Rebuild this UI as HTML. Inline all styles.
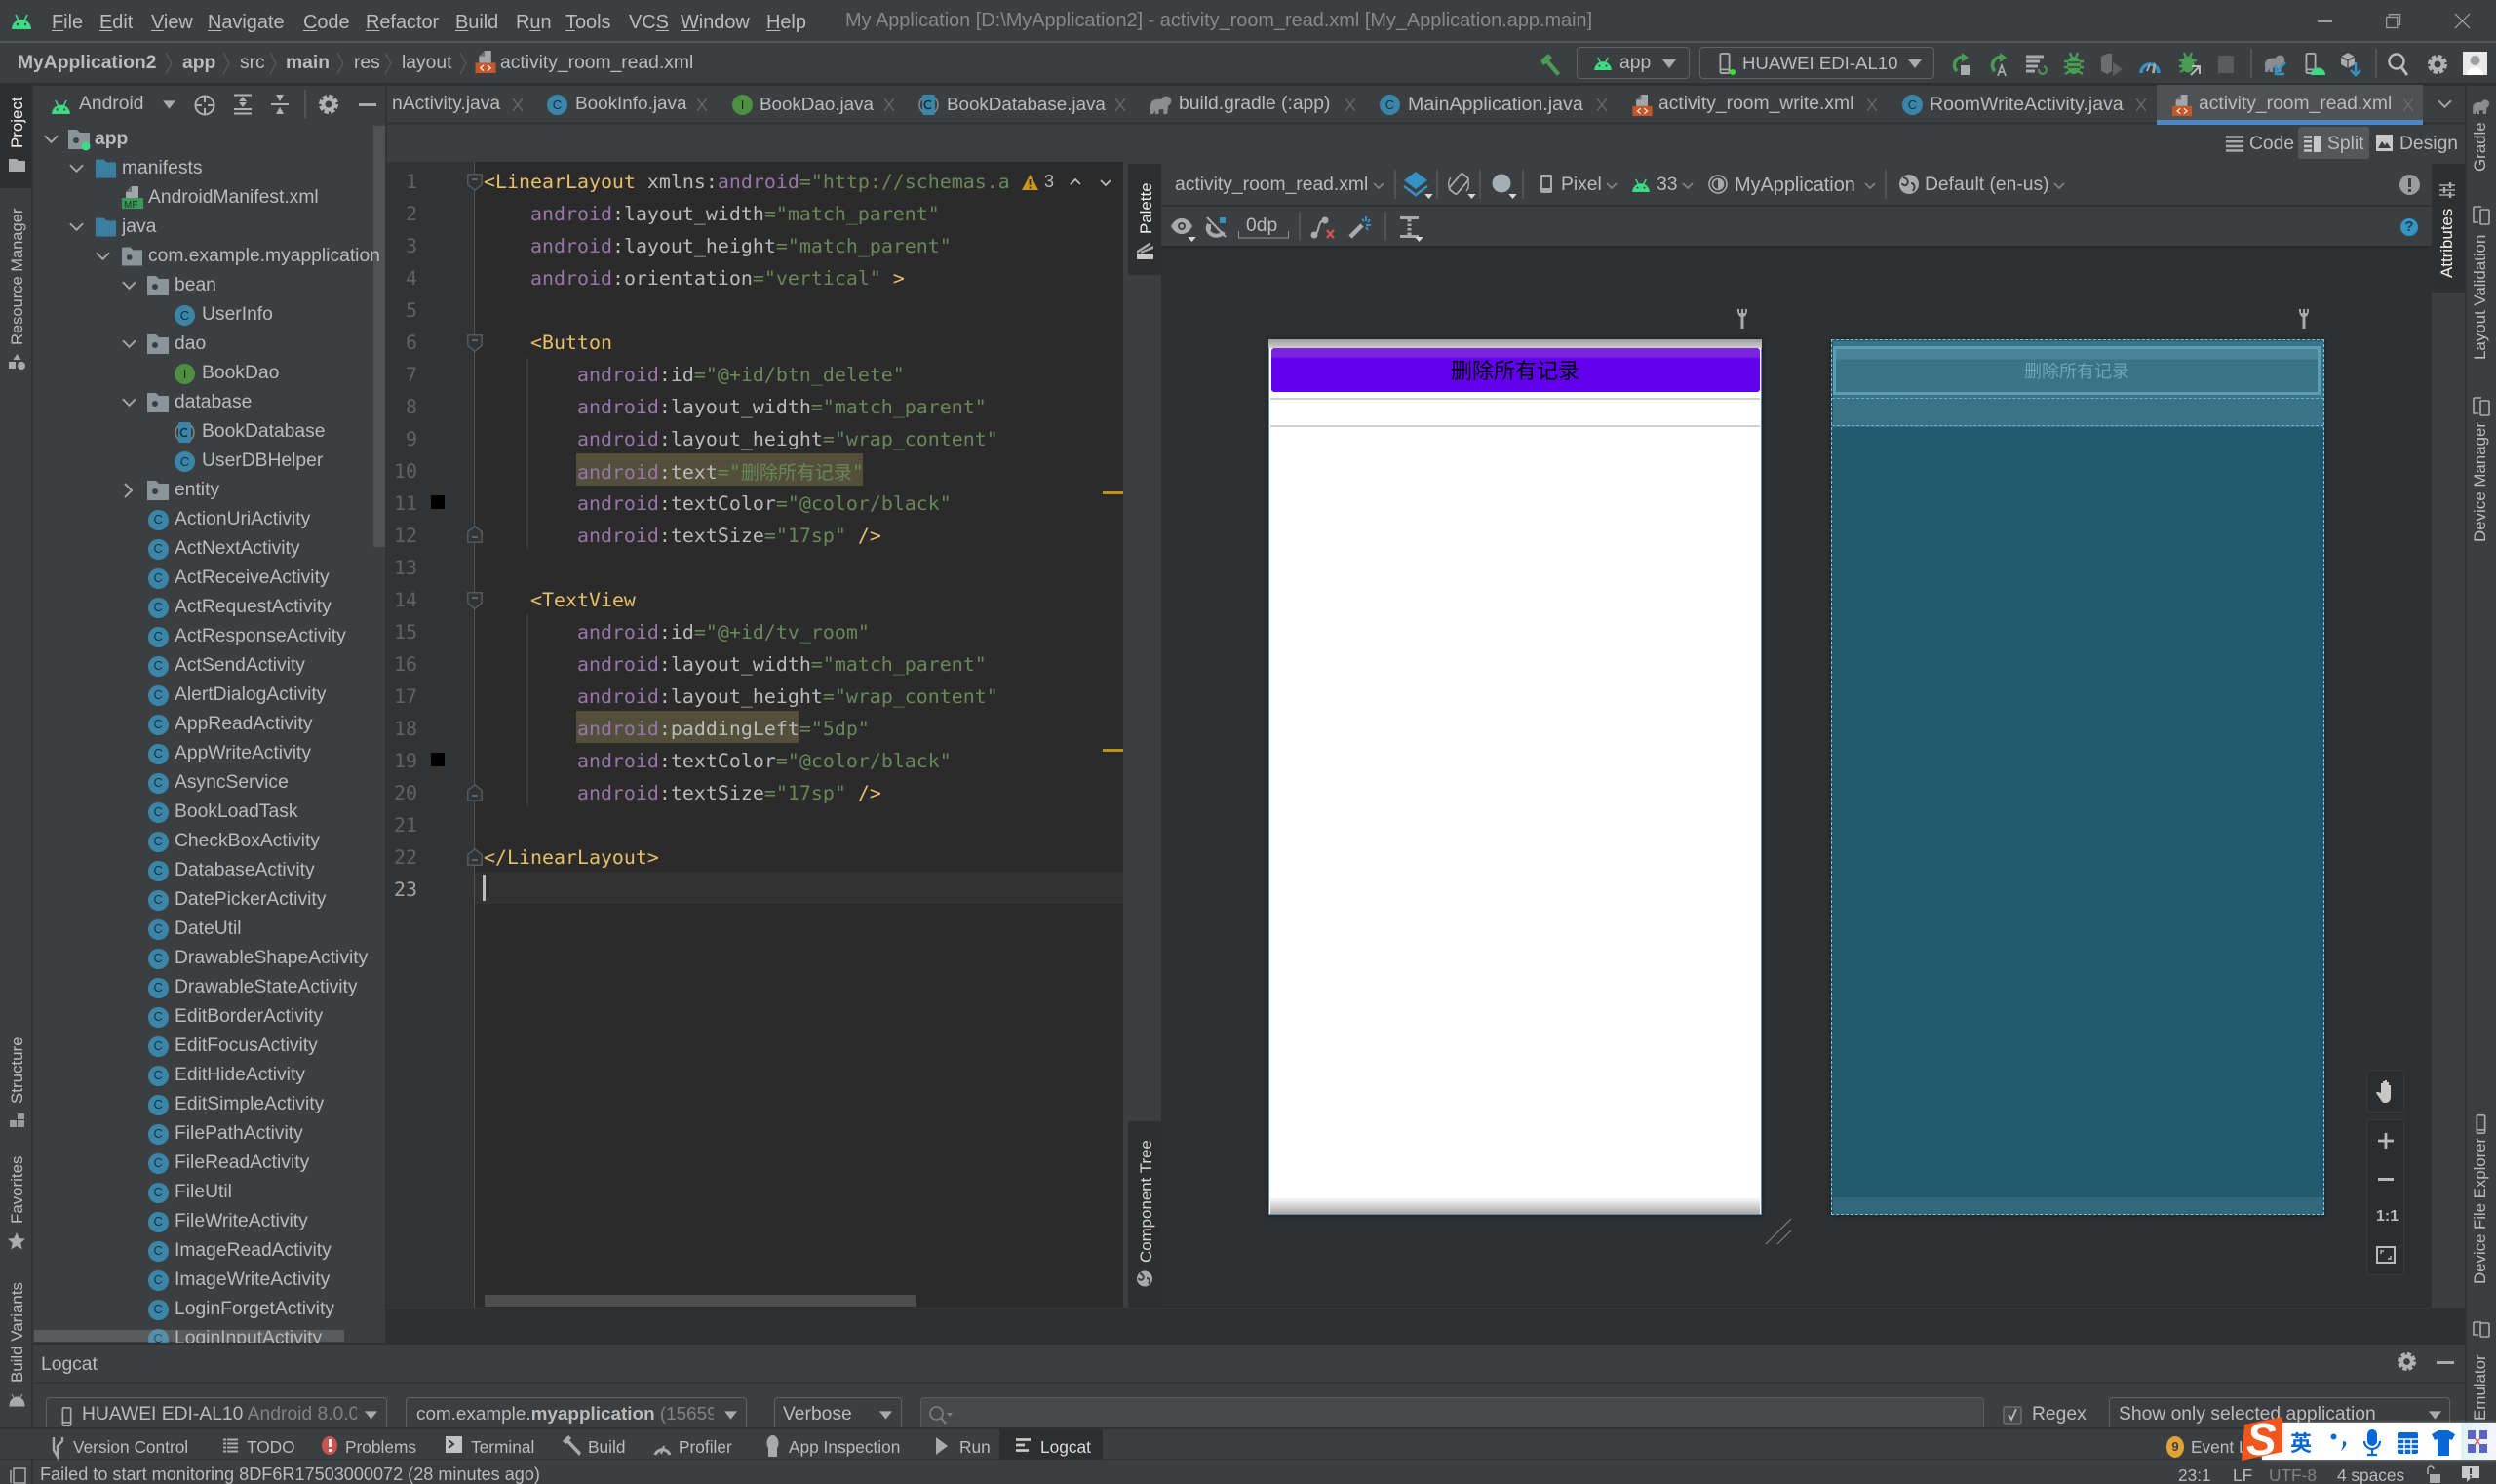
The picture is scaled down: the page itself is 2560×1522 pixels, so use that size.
<!DOCTYPE html>
<html lang="en"><head><meta charset="utf-8"><title>activity_room_read.xml</title>
<style>
*{box-sizing:border-box}
html{margin:0;padding:0;width:2560px;height:1522px;overflow:hidden}
body{margin:0;padding:0;position:relative;width:2560px;height:1522px;overflow:hidden;background:#3c3f41;color:#bbb;font:19.3px/30px "Liberation Sans","Noto Sans CJK SC",sans-serif}
.t{position:absolute;white-space:nowrap;margin-top:-15px;height:30px;line-height:30px}
.m{font-size:19.9px}
.b{position:absolute}
svg{position:absolute;overflow:visible}
u{text-decoration:underline;text-underline-offset:2px}
.dim{color:#808284}
.v{position:absolute;writing-mode:vertical-rl;transform:rotate(180deg);white-space:nowrap;font-size:16.9px;line-height:20px;color:#bbb}
.ci,.ii{position:absolute;width:21px;height:21px;border-radius:50%;background:#3b86a8;color:#12303e;font:13px/21px "Liberation Sans",sans-serif;text-align:center}
.ii{background:#4f8f42;color:#16300f}
.r{position:relative;height:30px;line-height:30px;white-space:nowrap;padding-left:179px}
.r svg{top:5px}
.c::before{content:"C";position:absolute;left:152px;top:5px;width:20.5px;height:20.5px;border-radius:50%;background:#3b86a8;color:#12303e;font:13px/20.5px "Liberation Sans",sans-serif;text-align:center}
.code{position:absolute;left:496px;top:169.5px;font:19.93px/33px "DejaVu Sans Mono","Liberation Mono",monospace;color:#bababa}
.code div{height:33px;white-space:pre}
.code i{font-style:normal}
.g{color:#e8bf6a}.n{color:#9876aa}.s{color:#6a8759}
.cj{font:19px/33px "Noto Sans CJK SC",sans-serif}
.ln{position:absolute;left:396px;top:169.5px;width:32px;text-align:right;font:19.93px/33px "DejaVu Sans Mono","Liberation Mono",monospace;color:#606366}
.ln div{height:33px}
.cb{position:absolute;border:1.5px solid #5f6365;border-radius:4px;background:#3c3f41}
.sep{position:absolute;width:2px;background:#515456}
.sm{font-size:17.3px}
</style></head><body>

<svg width="0" height="0" style="position:absolute"><defs>
<symbol id="and" viewBox="0 0 20 16"><path d="M0 16a10 10 0 0 1 20 0z" fill="#3ddc84"/><path d="M4 1l3 6M16 1l-3 6" stroke="#3ddc84" stroke-width="1.6"/><circle cx="6" cy="11" r="1.2" fill="#3c3f41"/><circle cx="14" cy="11" r="1.2" fill="#3c3f41"/></symbol>
<symbol id="xml" viewBox="0 0 22 24"><path d="M10 0h7v13H4V6z" fill="#a3a6a8"/><path d="M10 0v6H4z" fill="#6c6f71"/><rect y="13" width="22" height="11" fill="#c4582a"/><path d="M9 15.500l-3.500 3 3.500 3M13 15.500l3.500 3-3.500 3" fill="none" stroke="#eee" stroke-width="1.300"/></symbol>
<symbol id="x" viewBox="0 0 10 13"><path d="M0 0l10 13M10 0L0 13" stroke="#6b6e70" stroke-width="1.200"/></symbol>
<symbol id="cd" viewBox="0 0 16 10"><path d="M1 1l7 7 7-7" fill="none" stroke="#a6a8aa" stroke-width="2"/></symbol>
<symbol id="cr" viewBox="0 0 10 16"><path d="M1 1l7 7-7 7" fill="none" stroke="#a6a8aa" stroke-width="2"/></symbol>
<symbol id="fb" viewBox="0 0 22 20"><path d="M0 0h9l3 3h10v17H0z" fill="#3b7fa0"/></symbol>
<symbol id="fg" viewBox="0 0 22 20"><path d="M0 0h9l3 3h10v17H0z" fill="#8a9499"/><circle cx="8" cy="11" r="3" fill="#3c3f41"/></symbol>
<symbol id="fold" viewBox="0 0 16 18"><path d="M.8.800h14.400v10.700L8 17.200.8 11.500z" fill="#313335" stroke="#5a5c5e" stroke-width="1.400"/><path d="M5 6h6" stroke="#707274" stroke-width="1.500"/></symbol>
<symbol id="foldb" viewBox="0 0 16 18"><path d="M.8 17.200h14.400V6.500L8 .8.800 6.500z" fill="#313335" stroke="#5a5c5e" stroke-width="1.400"/><path d="M5 12h6" stroke="#707274" stroke-width="1.500"/></symbol>
<symbol id="gear" viewBox="0 0 20 20"><circle cx="10" cy="10" r="5.500" fill="none" stroke="#afb1b3" stroke-width="4"/><circle cx="10" cy="10" r="8.500" fill="none" stroke="#afb1b3" stroke-width="3" stroke-dasharray="4.500 2.170"/></symbol>
<symbol id="chev" viewBox="0 0 12 8"><path d="M1 1l5 5 5-5" fill="none" stroke="#7f8183" stroke-width="1.800"/></symbol>
<symbol id="tri" viewBox="0 0 14 9"><path d="M0 0h14L7 9z" fill="#a8aaac"/></symbol>
<symbol id="stri" viewBox="0 0 10 6"><path d="M0 0h10L5 6z" fill="#d8d8d8"/></symbol>
<symbol id="phone" viewBox="0 0 12 24"><rect x="1" y="1" width="10" height="22" rx="1.500" fill="none" stroke="#a8aaac" stroke-width="2"/><path d="M1 19h10" stroke="#a8aaac" stroke-width="2"/></symbol>
<symbol id="ele" viewBox="0 0 24 20"><path d="M1 20V11C1 6 5 4 10 4h3c1-3 4-4 7-3 3 1 4 4 3 7-1 2-2 3-3 3l-1 9h-4v-5h-5v5H6v-4l-2 4z" fill="#8b8e90"/></symbol>
</defs></svg>

<!-- title bar -->
<div class="b" style="left:0;top:42px;width:2560px;height:1.500px;background:#515658"></div>
<svg style="left:10px;top:14px" width="24" height="16"><use href="#and" width="24" height="16"/></svg>
<span class="t m" style="left:53px;top:23px"><u>F</u>ile</span>
<span class="t m" style="left:102px;top:23px"><u>E</u>dit</span>
<span class="t m" style="left:155px;top:23px"><u>V</u>iew</span>
<span class="t m" style="left:213px;top:23px"><u>N</u>avigate</span>
<span class="t m" style="left:311px;top:23px"><u>C</u>ode</span>
<span class="t m" style="left:375px;top:23px"><u>R</u>efactor</span>
<span class="t m" style="left:467px;top:23px"><u>B</u>uild</span>
<span class="t m" style="left:529px;top:23px">R<u>u</u>n</span>
<span class="t m" style="left:580px;top:23px"><u>T</u>ools</span>
<span class="t m" style="left:645px;top:23px">VC<u>S</u></span>
<span class="t m" style="left:698px;top:23px"><u>W</u>indow</span>
<span class="t m" style="left:786px;top:23px"><u>H</u>elp</span>
<span class="t m" style="left:867px;top:21px;color:#86898b">My Application [D:\MyApplication2] - activity_room_read.xml [My_Application.app.main]</span>
<div class="b" style="left:2377px;top:21px;width:15px;height:2px;background:#9b9d9f"></div>
<svg style="left:2447px;top:14px" width="15" height="15"><path d="M3.500 3V.7h11v10.600H12M.7 3.500h11v11H.7z" fill="none" stroke="#9b9d9f" stroke-width="1.300"/></svg>
<svg style="left:2518px;top:14px" width="15" height="15"><path d="M0 0l15 15M15 0L0 15" stroke="#a8aaac" stroke-width="1.200"/></svg>

<!-- nav bar -->
<span class="t" style="left:18px;top:65px;font-weight:bold">MyApplication2</span>
<svg style="left:169px;top:54px" width="8" height="22"><path d="M1 0l6 11-6 11" fill="none" stroke="#5c5f61"/></svg>
<span class="t" style="left:187px;top:65px;font-weight:bold">app</span>
<svg style="left:228px;top:54px" width="8" height="22"><path d="M1 0l6 11-6 11" fill="none" stroke="#5c5f61"/></svg>
<span class="t" style="left:246px;top:65px">src</span>
<svg style="left:276px;top:54px" width="8" height="22"><path d="M1 0l6 11-6 11" fill="none" stroke="#5c5f61"/></svg>
<span class="t" style="left:293px;top:65px;font-weight:bold">main</span>
<svg style="left:345px;top:54px" width="8" height="22"><path d="M1 0l6 11-6 11" fill="none" stroke="#5c5f61"/></svg>
<span class="t" style="left:363px;top:65px">res</span>
<svg style="left:394px;top:54px" width="8" height="22"><path d="M1 0l6 11-6 11" fill="none" stroke="#5c5f61"/></svg>
<span class="t" style="left:412px;top:65px">layout</span>
<svg style="left:471px;top:54px" width="8" height="22"><path d="M1 0l6 11-6 11" fill="none" stroke="#5c5f61"/></svg>
<svg style="left:487px;top:52px" width="22" height="23"><use href="#xml" width="22" height="23"/></svg>
<span class="t" style="left:513px;top:65px">activity_room_read.xml</span>

<!-- main toolbar -->
<svg style="left:1578px;top:54px" width="24" height="24"><path d="M2 8l8-7 4 4-3 3 11 13-3 3L8 11 5 13z" fill="#499c54"/></svg>
<div class="cb" style="left:1617px;top:48px;width:116px;height:33px"></div>
<svg style="left:1635px;top:58px" width="18" height="14"><use href="#and" width="18" height="14"/></svg>
<span class="t" style="left:1661px;top:65px">app</span>
<svg style="left:1705px;top:61px" width="14" height="9"><use href="#tri" width="14" height="9"/></svg>
<div class="cb" style="left:1743px;top:48px;width:241px;height:33px"></div>
<svg style="left:1763px;top:54px" width="12" height="22"><use href="#phone" width="12" height="22"/></svg>
<div class="b" style="left:1774px;top:71px;width:6px;height:6px;border-radius:50%;background:#2ee62e"></div>
<span class="t" style="left:1787px;top:65px;font-size:18.6px">HUAWEI EDI-AL10</span>
<svg style="left:1957px;top:61px" width="14" height="9"><use href="#tri" width="14" height="9"/></svg>

<svg style="left:2000px;top:54px" width="22" height="24"><path d="M13 4.500a8.500 8.500 0 0 0-6 14.500" fill="none" stroke="#499c54" stroke-width="3.500"/><path d="M12 0l7 5-7 5z" fill="#499c54"/><rect x="11" y="13" width="9" height="10" fill="#a8aaac"/></svg>
<svg style="left:2039px;top:54px" width="22" height="24"><path d="M13 4.500a8.500 8.500 0 0 0-6 14.500" fill="none" stroke="#499c54" stroke-width="3.500"/><path d="M12 0l7 5-7 5z" fill="#499c54"/><path d="M10 24l4-11 4 11M11.500 20h5" fill="none" stroke="#a8aaac" stroke-width="1.700"/></svg>
<svg style="left:2078px;top:56px" width="22" height="20"><path d="M0 2h18M0 7h14M0 12h12M0 17h9" stroke="#a8aaac" stroke-width="3"/><path d="M13 15a4 4 0 1 0 5-3" fill="none" stroke="#499c54" stroke-width="2"/></svg>
<svg style="left:2117px;top:54px" width="20" height="24"><ellipse cx="10" cy="13" rx="7" ry="9" fill="#499c54"/><path d="M6 0l2 5M14 0l-2 5M0 9h20M0 15h20M1 22l5-3M19 22l-5-3" stroke="#499c54" stroke-width="2.400"/><path d="M4 10h12M4 15h12" stroke="#3c3f41" stroke-width="1.500"/></svg>
<svg style="left:2155px;top:54px" width="22" height="24"><path d="M0 4l6-3h5v18l-5 3-6-3z" fill="#6b6e70"/><path d="M12 10l10 7-10 7z" fill="#5d6062"/></svg>
<svg style="left:2194px;top:56px" width="22" height="20"><path d="M2 19a9 9 0 0 1 18 0" fill="none" stroke="#3592c4" stroke-width="3.500"/><path d="M16 19h-3l2-11 2 2z" fill="#a8aaac" /><path d="M8 17l3-7" stroke="#a8aaac" stroke-width="2"/></svg>
<svg style="left:2235px;top:54px" width="22" height="24"><ellipse cx="9" cy="12" rx="6.500" ry="8.500" fill="#499c54"/><path d="M5 0l2 5M13 0l-2 5M0 8h18M0 14h12M1 20l5-3" stroke="#499c54" stroke-width="2.400"/><path d="M12 23l9-9M21 22v-8h-8" fill="none" stroke="#b8babc" stroke-width="2"/></svg>
<div class="b" style="left:2275px;top:57px;width:16px;height:18px;background:#5a5b5c"></div>
<div class="sep" style="left:2308px;top:50px;height:30px"></div>
<svg style="left:2322px;top:56px" width="22" height="18"><use href="#ele" width="22" height="18"/></svg>
<svg style="left:2332px;top:63px" width="14" height="15"><path d="M12 1L3 11M2 4v9h9" fill="none" stroke="#3592c4" stroke-width="2.500"/></svg>
<svg style="left:2364px;top:54px" width="12" height="22"><use href="#phone" width="12" height="22"/></svg>
<svg style="left:2370px;top:66px" width="15" height="11"><path d="M0 11a7.500 7.500 0 0 1 15 0z" fill="#3ddc84"/></svg>
<svg style="left:2400px;top:54px" width="24" height="24"><path d="M8 0l7 4v8l-7 4-7-4V4z" fill="#a8aaac"/><path d="M1 4l7 4 7-4M8 8v8" fill="none" stroke="#3c3f41" stroke-width="1.200"/><path d="M16 10v12M11 18l5 5 5-5" fill="none" stroke="#3592c4" stroke-width="2.500"/></svg>
<div class="sep" style="left:2436px;top:50px;height:30px"></div>
<svg style="left:2449px;top:54px" width="22" height="24"><circle cx="9" cy="9" r="7.500" fill="none" stroke="#b8babc" stroke-width="2.500"/><path d="M14 15l6 8" stroke="#b8babc" stroke-width="3"/></svg>
<svg style="left:2490px;top:56px" width="20" height="20"><use href="#gear" width="20" height="20"/></svg>
<div class="b" style="left:2526px;top:53px;width:25px;height:24px;background:#e8e8e8"></div>
<svg style="left:2526px;top:53px" width="25" height="24"><circle cx="12.500" cy="9" r="5" fill="#9ea0a2"/><path d="M4 24c1-7 5-8 8.500-8s7.500 1 8.500 8z" fill="#fff"/></svg>

<!-- horizontal dark seps -->
<div class="b" style="left:0;top:85px;width:2560px;height:2.500px;background:#2f3133"></div>

<!-- left strip -->
<div class="b" style="left:32px;top:87px;width:1.500px;height:1435px;background:#323537"></div>
<div class="b" style="left:0;top:87px;width:32px;height:106px;background:#2d2f30"></div>
<span class="v" style="left:8px;top:100px;color:#f2f2f2;height:52px">Project</span>
<svg style="left:9px;top:163px" width="17" height="13"><path d="M0 0h8l2 2h7v11H0z" fill="#a8aaac"/></svg>
<span class="v" style="left:8px;top:213px;height:141px;font-size:16.5px">Resource Manager</span>
<svg style="left:9px;top:363px" width="17" height="16"><path d="M8.500 0l4 6h-8z M0 8h7v7H0z" fill="#a8aaac"/><circle cx="13" cy="12" r="4" fill="#a8aaac"/></svg>
<span class="v" style="left:8px;top:1063px;height:69px">Structure</span>
<svg style="left:10px;top:1142px" width="15" height="14"><path d="M8 0h7v6H8zM0 7h7v7H0zM8 7h7v7H8z" fill="#9a9c9e"/></svg>
<span class="v" style="left:8px;top:1188px;height:67px">Favorites</span>
<svg style="left:8px;top:1264px" width="18" height="18"><path d="M9 0l2.700 6 6.300.6-4.800 4.300 1.500 6.500L9 14l-5.700 3.400 1.500-6.500L0 6.600 6.300 6z" fill="#a8aaac"/></svg>
<span class="v" style="left:8px;top:1316px;height:102px">Build Variants</span>
<svg style="left:10px;top:1430px" width="15" height="12"><path d="M0 12a7.500 9 0 0 1 15 0zM2 0l3 5M13 0l-3 5" fill="#a8aaac" stroke="#a8aaac"/></svg>

<!-- project tool window header -->
<svg style="left:53px;top:102px" width="19" height="15"><use href="#and" width="19" height="15"/></svg>
<span class="t" style="left:81px;top:107px">Android</span>
<svg style="left:167px;top:103px" width="13" height="9"><use href="#tri" width="13" height="9"/></svg>
<svg style="left:199px;top:97px" width="22" height="22"><circle cx="11" cy="11" r="9.500" fill="none" stroke="#afb1b3" stroke-width="2"/><path d="M11 1v7M11 14v7M1 11h7M14 11h7" stroke="#afb1b3" stroke-width="2"/></svg>
<svg style="left:240px;top:96px" width="18" height="22"><path d="M0 1.500h18M0 20.500h18M0 16h18" stroke="#afb1b3" stroke-width="2"/><path d="M9 3l4 5H5zM9 14l-4-5h8z" fill="#afb1b3"/></svg>
<svg style="left:278px;top:96px" width="18" height="22"><path d="M0 11h18" stroke="#afb1b3" stroke-width="2"/><path d="M9 8L5 1h8zM9 14l4 7H5z" fill="#afb1b3"/></svg>
<div class="sep" style="left:312px;top:92px;height:29px"></div>
<svg style="left:327px;top:97px" width="20" height="20"><use href="#gear" width="20" height="20"/></svg>
<div class="b" style="left:368px;top:106px;width:18px;height:2.500px;background:#a8aaac"></div>

<!-- tree scrollbar (beneath the rows) -->
<div class="b" style="left:383px;top:129px;width:12px;height:432px;background:#505355"></div>

<!-- project tree -->
<div class="b" style="left:33px;top:128px;width:363px;height:1249px;overflow:hidden">
<div style="position:relative;left:-33px;width:396px;height:1260px;overflow:hidden">
<div class="r" style="padding-left:97px;font-weight:bold"><svg style="left:45px;top:10px" width="15" height="10"><use href="#cd" width="15" height="10"/></svg><svg style="left:70px" width="22" height="20"><use href="#fg" width="22" height="20"/></svg><svg style="left:83px;top:17px" width="10" height="10"><circle cx="5" cy="5" r="4.500" fill="#3ddc84"/></svg>app</div>
<div class="r" style="padding-left:125px"><svg style="left:71px;top:10px" width="15" height="10"><use href="#cd" width="15" height="10"/></svg><svg style="left:98px" width="21" height="20"><use href="#fb" width="21" height="20"/></svg>manifests</div>
<div class="r" style="padding-left:152px"><svg style="left:125px;top:3px" width="22" height="23"><path d="M10 0h7v12H4V6z" fill="#a3a6a8"/><path d="M10 0v6H4z" fill="#6c6f71"/><rect y="12" width="22" height="11" fill="#3a9a5c"/><text x="2" y="22" font-size="10" font-family="Liberation Sans,sans-serif" fill="#16331f">MF</text></svg>AndroidManifest.xml</div>
<div class="r" style="padding-left:125px"><svg style="left:71px;top:10px" width="15" height="10"><use href="#cd" width="15" height="10"/></svg><svg style="left:98px" width="21" height="20"><use href="#fb" width="21" height="20"/></svg>java</div>
<div class="r" style="padding-left:152px"><svg style="left:98px;top:10px" width="15" height="10"><use href="#cd" width="15" height="10"/></svg><svg style="left:125px" width="21" height="20"><use href="#fg" width="21" height="20"/></svg>com.example.myapplication</div>
<div class="r"><svg style="left:125px;top:10px" width="15" height="10"><use href="#cd" width="15" height="10"/></svg><svg style="left:151px" width="22" height="20"><use href="#fg" width="22" height="20"/></svg>bean</div>
<div class="r" style="padding-left:207px"><span class="ci" style="left:179px;top:5px">C</span>UserInfo</div>
<div class="r"><svg style="left:125px;top:10px" width="15" height="10"><use href="#cd" width="15" height="10"/></svg><svg style="left:151px" width="22" height="20"><use href="#fg" width="22" height="20"/></svg>dao</div>
<div class="r" style="padding-left:207px"><span class="ii" style="left:179px;top:5px">I</span>BookDao</div>
<div class="r"><svg style="left:125px;top:10px" width="15" height="10"><use href="#cd" width="15" height="10"/></svg><svg style="left:151px" width="22" height="20"><use href="#fg" width="22" height="20"/></svg>database</div>
<div class="r" style="padding-left:207px"><svg style="left:179px" width="21" height="21"><circle cx="10.500" cy="10.500" r="9.500" fill="none" stroke="#7f8a90" stroke-width="1.500"/><rect x="4" y="0" width="13" height="21" rx="2" fill="#3b86a8"/><path d="M13 7.500a4 4 0 1 0 0 6" fill="none" stroke="#12303e" stroke-width="1.600"/></svg>BookDatabase</div>
<div class="r" style="padding-left:207px"><span class="ci" style="left:179px;top:5px">C</span>UserDBHelper</div>
<div class="r"><svg style="left:127px;top:7px" width="10" height="16"><use href="#cr" width="10" height="16"/></svg><svg style="left:151px" width="22" height="20"><use href="#fg" width="22" height="20"/></svg>entity</div>
<div class="r c">ActionUriActivity</div>
<div class="r c">ActNextActivity</div>
<div class="r c">ActReceiveActivity</div>
<div class="r c">ActRequestActivity</div>
<div class="r c">ActResponseActivity</div>
<div class="r c">ActSendActivity</div>
<div class="r c">AlertDialogActivity</div>
<div class="r c">AppReadActivity</div>
<div class="r c">AppWriteActivity</div>
<div class="r c">AsyncService</div>
<div class="r c">BookLoadTask</div>
<div class="r c">CheckBoxActivity</div>
<div class="r c">DatabaseActivity</div>
<div class="r c">DatePickerActivity</div>
<div class="r c">DateUtil</div>
<div class="r c">DrawableShapeActivity</div>
<div class="r c">DrawableStateActivity</div>
<div class="r c">EditBorderActivity</div>
<div class="r c">EditFocusActivity</div>
<div class="r c">EditHideActivity</div>
<div class="r c">EditSimpleActivity</div>
<div class="r c">FilePathActivity</div>
<div class="r c">FileReadActivity</div>
<div class="r c">FileUtil</div>
<div class="r c">FileWriteActivity</div>
<div class="r c">ImageReadActivity</div>
<div class="r c">ImageWriteActivity</div>
<div class="r c">LoginForgetActivity</div>
<div class="r c">LoginInputActivity</div>
</div></div>
<div class="b" style="left:35px;top:1364px;width:318px;height:12px;background:rgba(170,170,170,.25)"></div>
<div class="b" style="left:395px;top:87px;width:1.500px;height:1290px;background:#323537"></div>

<!-- tabs -->
<div class="b" style="left:396px;top:125px;width:2132px;height:3px;background:#323537"></div>
<span class="t" style="left:402px;top:107px">nActivity.java</span>
<svg style="left:526px;top:101px" width="10" height="13"><use href="#x" width="10" height="13"/></svg>
<span class="ci" style="left:561px;top:97px">C</span>
<span class="t" style="left:590px;top:107px;font-size:18.9px">BookInfo.java</span>
<svg style="left:715px;top:101px" width="10" height="13"><use href="#x" width="10" height="13"/></svg>
<span class="ii" style="left:751px;top:97px">I</span>
<span class="t" style="left:779px;top:107px;font-size:18.8px">BookDao.java</span>
<svg style="left:907px;top:101px" width="10" height="13"><use href="#x" width="10" height="13"/></svg>
<svg style="left:942px;top:97px" width="21" height="21"><circle cx="10.500" cy="10.500" r="9.500" fill="none" stroke="#7f8a90" stroke-width="1.500"/><rect x="4" y="0" width="13" height="21" rx="2" fill="#3b86a8"/><path d="M13 7.500a4 4 0 1 0 0 6" fill="none" stroke="#12303e" stroke-width="1.600"/></svg>
<span class="t" style="left:971px;top:107px;font-size:18.8px">BookDatabase.java</span>
<svg style="left:1144px;top:101px" width="10" height="13"><use href="#x" width="10" height="13"/></svg>
<svg style="left:1179px;top:98px" width="23" height="19"><use href="#ele" width="23" height="19"/></svg>
<span class="t" style="left:1209px;top:107px">build.gradle (:app)</span>
<svg style="left:1380px;top:101px" width="10" height="13"><use href="#x" width="10" height="13"/></svg>
<span class="ci" style="left:1415px;top:97px">C</span>
<span class="t" style="left:1444px;top:107px;font-size:19.6px">MainApplication.java</span>
<svg style="left:1638px;top:101px" width="10" height="13"><use href="#x" width="10" height="13"/></svg>
<svg style="left:1673px;top:97px" width="23" height="22"><use href="#xml" width="23" height="22"/></svg>
<span class="t" style="left:1701px;top:107px">activity_room_write.xml</span>
<svg style="left:1915px;top:101px" width="10" height="13"><use href="#x" width="10" height="13"/></svg>
<span class="ci" style="left:1951px;top:97px">C</span>
<span class="t" style="left:1979px;top:107px;font-size:19.5px">RoomWriteActivity.java</span>
<svg style="left:2191px;top:101px" width="10" height="13"><use href="#x" width="10" height="13"/></svg>
<div class="b" style="left:2212px;top:87px;width:273px;height:36px;background:#4e5254"></div>
<div class="b" style="left:2212px;top:123px;width:273px;height:5px;background:#4a88c7"></div>
<svg style="left:2227px;top:97px" width="22" height="22"><use href="#xml" width="22" height="22"/></svg>
<span class="t" style="left:2255px;top:107px">activity_room_read.xml</span>
<svg style="left:2465px;top:101px" width="10" height="13"><use href="#x" width="10" height="13"/></svg>
<svg style="left:2500px;top:102px" width="15" height="10"><use href="#cd" width="15" height="10"/></svg>

<!-- Code/Split/Design -->
<svg style="left:2283px;top:139px" width="18" height="17"><path d="M0 1.500h18M0 6.200h18M0 11h18M0 15.500h18" stroke="#a8aaac" stroke-width="2.400"/></svg>
<span class="t" style="left:2307px;top:148px">Code</span>
<div class="b" style="left:2357px;top:130px;width:73px;height:33px;background:#55585a;border-radius:3px"></div>
<svg style="left:2363px;top:139px" width="18" height="17"><path d="M0 1.500h8M0 6.200h8M0 11h8M0 15.500h8" stroke="#c8c8c8" stroke-width="2.400"/><rect x="10" y="0" width="8" height="17" fill="#c8c8c8"/></svg>
<span class="t" style="left:2387px;top:148px">Split</span>
<svg style="left:2437px;top:138px" width="17" height="17"><rect width="17" height="17" fill="#c8c8c8"/><path d="M2 14l4-7 3 4 2-3 4 6z" fill="#3c3f41"/></svg>
<span class="t" style="left:2461px;top:148px">Design</span>

<!-- editor -->
<div class="b" style="left:396px;top:166px;width:756px;height:1175px;background:#2b2b2b"></div>
<div class="b" style="left:396px;top:166px;width:90px;height:1175px;background:#313335"></div>
<div class="b" style="left:486px;top:894px;width:666px;height:33px;background:#323232"></div>
<div class="b" style="left:396px;top:894px;width:90px;height:33px;background:#323436"></div>
<div class="b" style="left:485.500px;top:166px;width:1.500px;height:1175px;background:#555"></div>
<div class="b" style="left:591px;top:465px;width:294px;height:33px;background:#52503a"></div>
<div class="b" style="left:591px;top:729px;width:228px;height:33px;background:#52503a"></div>
<div class="b" style="left:540px;top:367px;width:1.500px;height:196px;background:#3b3b3b"></div>
<div class="b" style="left:540px;top:630px;width:1.500px;height:197px;background:#3b3b3b"></div>

<div class="ln"><div>1</div><div>2</div><div>3</div><div>4</div><div>5</div><div>6</div><div>7</div><div>8</div><div>9</div><div>10</div><div>11</div><div>12</div><div>13</div><div>14</div><div>15</div><div>16</div><div>17</div><div>18</div><div>19</div><div>20</div><div>21</div><div>22</div><div style="color:#a4a3a3">23</div></div>

<svg style="left:479px;top:178px" width="16" height="18"><use href="#fold" width="16" height="18"/></svg>
<svg style="left:479px;top:343px" width="16" height="18"><use href="#fold" width="16" height="18"/></svg>
<svg style="left:479px;top:539px" width="16" height="18"><use href="#foldb" width="16" height="18"/></svg>
<svg style="left:479px;top:607px" width="16" height="18"><use href="#fold" width="16" height="18"/></svg>
<svg style="left:479px;top:804px" width="16" height="18"><use href="#foldb" width="16" height="18"/></svg>
<svg style="left:479px;top:870px" width="16" height="18"><use href="#foldb" width="16" height="18"/></svg>
<div class="b" style="left:442px;top:508px;width:14px;height:14px;background:#000"></div>
<div class="b" style="left:442px;top:772px;width:14px;height:14px;background:#000"></div>

<div class="code"><div><i class="g">&lt;LinearLayout</i> xmlns:<i class="n">android</i><i class="s">="http://schemas.a</i></div>
<div>    <i class="n">android</i>:layout_width<i class="s">="match_parent"</i></div>
<div>    <i class="n">android</i>:layout_height<i class="s">="match_parent"</i></div>
<div>    <i class="n">android</i>:orientation<i class="s">="vertical"</i> <i class="g">&gt;</i></div>
<div></div>
<div>    <i class="g">&lt;Button</i></div>
<div>        <i class="n">android</i>:id<i class="s">="@+id/btn_delete"</i></div>
<div>        <i class="n">android</i>:layout_width<i class="s">="match_parent"</i></div>
<div>        <i class="n">android</i>:layout_height<i class="s">="wrap_content"</i></div>
<div>        <i class="n">android</i>:text<i class="s">="<i class="cj">删除所有记录</i>"</i></div>
<div>        <i class="n">android</i>:textColor<i class="s">="@color/black"</i></div>
<div>        <i class="n">android</i>:textSize<i class="s">="17sp"</i> <i class="g">/&gt;</i></div>
<div></div>
<div>    <i class="g">&lt;TextView</i></div>
<div>        <i class="n">android</i>:id<i class="s">="@+id/tv_room"</i></div>
<div>        <i class="n">android</i>:layout_width<i class="s">="match_parent"</i></div>
<div>        <i class="n">android</i>:layout_height<i class="s">="wrap_content"</i></div>
<div>        <i class="n">android</i>:paddingLeft<i class="s">="5dp"</i></div>
<div>        <i class="n">android</i>:textColor<i class="s">="@color/black"</i></div>
<div>        <i class="n">android</i>:textSize<i class="s">="17sp"</i> <i class="g">/&gt;</i></div>
<div></div>
<div><i class="g">&lt;/LinearLayout&gt;</i></div>
<div></div></div>
<div class="b" style="left:495px;top:897px;width:2.500px;height:27px;background:#bbb"></div>

<svg style="left:1048px;top:179px" width="17" height="16"><path d="M8.500 0L17 16H0z" fill="#c99a1a"/><path d="M8.500 5v6M8.500 12.500v2" stroke="#2b2b2b" stroke-width="1.800"/></svg>
<span class="t" style="left:1071px;top:186px;font-size:18px">3</span>
<svg style="left:1097px;top:182px" width="12" height="8"><path d="M1 7l5-5 5 5" fill="none" stroke="#b8babc" stroke-width="1.800"/></svg>
<svg style="left:1128px;top:184px" width="12" height="8"><path d="M1 1l5 5 5-5" fill="none" stroke="#b8babc" stroke-width="1.800"/></svg>
<div class="b" style="left:1131px;top:504px;width:21px;height:3px;background:#be9117"></div>
<div class="b" style="left:1131px;top:768px;width:21px;height:3px;background:#be9117"></div>
<div class="b" style="left:497px;top:1328px;width:443px;height:12px;background:#4d4d4d"></div>

<!-- palette strip -->
<div class="b" style="left:1152px;top:166px;width:39px;height:1175px;background:#3c3f41"></div>
<div class="b" style="left:1157px;top:168px;width:34px;height:114px;background:#2d2f30"></div>
<div class="b" style="left:1157px;top:1150px;width:34px;height:191px;background:#2d2f30"></div>
<span class="v" style="left:1166px;top:189px;color:#f2f2f2;height:51px">Palette</span>
<svg style="left:1166px;top:248px" width="18" height="18"><path d="M0 9L14 0v3L0 12zM4 10l13-6v3L4 12z" fill="#a8aaac"/><rect x="0" y="12" width="17" height="6" rx="1" fill="#c8c8c8"/></svg>
<span class="v" style="left:1166px;top:1167px;color:#d8d8d8;height:128px">Component Tree</span>
<svg style="left:1165px;top:1303px" width="18" height="17"><circle cx="9" cy="8.500" r="8" fill="#a8aaac"/><path d="M4 3c3 1 5 4 3 6s-4 0-4-1M11 8c3 0 4 2 2 6" fill="none" stroke="#3c3f41" stroke-width="2"/></svg>

<!-- design toolbars -->
<div class="b" style="left:1191px;top:168px;width:1303px;height:85px;background:#3c3f41"></div>
<div class="b" style="left:1191px;top:210px;width:1303px;height:1.500px;background:#2f3133"></div>
<div class="b" style="left:1191px;top:253px;width:1337px;height:1088px;background:#2e3032"></div>
<div class="b" style="left:1191px;top:251.500px;width:1303px;height:2px;background:#292b2d"></div>
<div class="b" style="left:2494px;top:253px;width:34px;height:1088px;background:#3c3f41"></div>
<span class="t" style="left:1205px;top:190px">activity_room_read.xml</span>
<svg style="left:1408px;top:187px" width="12" height="8"><use href="#chev" width="12" height="8"/></svg>
<div class="sep" style="left:1430px;top:174px;height:30px"></div>
<svg style="left:1440px;top:176px" width="24" height="28"><path d="M12 0l12 9-12 9L0 9z" fill="#3592c4"/><path d="M0 15l12 9 12-9" fill="none" stroke="#3592c4" stroke-width="2.500"/></svg>
<svg style="left:1461px;top:199px" width="9" height="5"><use href="#stri" width="9" height="5"/></svg>
<div class="sep" style="left:1473px;top:174px;height:30px"></div>
<svg style="left:1484px;top:176px" width="24" height="26"><rect x="7" y="2" width="10" height="21" rx="2" fill="none" stroke="#a8aaac" stroke-width="1.800" transform="rotate(40 12 13)"/><path d="M4 6a11 11 0 0 0-1 12M20 20a11 11 0 0 0 1-12" fill="none" stroke="#a8aaac" stroke-width="1.400"/></svg>
<svg style="left:1505px;top:199px" width="9" height="5"><use href="#stri" width="9" height="5"/></svg>
<div class="sep" style="left:1517px;top:174px;height:30px"></div>
<svg style="left:1530px;top:178px" width="20" height="20"><circle cx="10" cy="10" r="9.500" fill="#a3aeb5"/><path d="M12 .5a9.500 9.500 0 0 1 0 19 8 8 0 0 0 0-19z" fill="#d8d8d8"/></svg>
<svg style="left:1547px;top:199px" width="9" height="5"><use href="#stri" width="9" height="5"/></svg>
<div class="sep" style="left:1561px;top:174px;height:30px"></div>
<svg style="left:1580px;top:179px" width="12" height="19"><rect width="12" height="19" rx="2" fill="#a8aaac"/><rect x="2" y="3" width="8" height="11" fill="#3c3f41"/></svg>
<span class="t" style="left:1601px;top:190px">Pixel</span>
<svg style="left:1647px;top:187px" width="12" height="8"><use href="#chev" width="12" height="8"/></svg>
<svg style="left:1674px;top:183px" width="18" height="14"><use href="#and" width="18" height="14"/></svg>
<span class="t" style="left:1699px;top:190px">33</span>
<svg style="left:1725px;top:187px" width="12" height="8"><use href="#chev" width="12" height="8"/></svg>
<svg style="left:1752px;top:179px" width="20" height="20"><circle cx="10" cy="10" r="9" fill="none" stroke="#a8aaac" stroke-width="1.600"/><circle cx="10" cy="10" r="5.500" fill="none" stroke="#a8aaac" stroke-width="1.600"/><path d="M10 5a5 5 0 0 1 0 10z" fill="#a8aaac"/></svg>
<span class="t" style="left:1779px;top:190px;font-size:19.9px">MyApplication</span>
<svg style="left:1912px;top:187px" width="12" height="8"><use href="#chev" width="12" height="8"/></svg>
<div class="sep" style="left:1933px;top:174px;height:30px"></div>
<svg style="left:1948px;top:179px" width="20" height="20"><circle cx="10" cy="10" r="10" fill="#a8aaac"/><path d="M4 3c4 1 6 4 4 7s-5 0-5-1M12 9c3 0 5 3 2 8" fill="none" stroke="#3c3f41" stroke-width="2"/></svg>
<span class="t" style="left:1974px;top:190px">Default (en-us)</span>
<svg style="left:2106px;top:187px" width="12" height="8"><use href="#chev" width="12" height="8"/></svg>
<div class="b" style="left:2461px;top:179px;width:21px;height:21px;border-radius:50%;background:#9a9c9e"></div>
<div class="b" style="left:2470px;top:183px;width:3px;height:9px;background:#3c3f41"></div>
<div class="b" style="left:2470px;top:194px;width:3px;height:3px;background:#3c3f41"></div>

<svg style="left:1201px;top:224px" width="22" height="18"><path d="M0 8C4 1 8 0 11 0s7 1 11 8c-4 7-8 8-11 8S4 15 0 8z" fill="#a8aaac"/><circle cx="11" cy="8" r="4" fill="#3c3f41"/><circle cx="11" cy="8" r="2" fill="#a8aaac"/></svg>
<svg style="left:1218px;top:243px" width="9" height="5"><use href="#stri" width="9" height="5"/></svg>
<svg style="left:1237px;top:222px" width="21" height="23"><path d="M3 8a8 7 0 0 0 15 8M3 8v6" fill="none" stroke="#a8aaac" stroke-width="4"/><path d="M1 1l19 20" stroke="#a8aaac" stroke-width="2"/><rect x="14" y="1" width="6" height="6" fill="#3592c4"/></svg>
<span class="t" style="left:1278px;top:232px">0dp</span>
<svg style="left:1270px;top:236px" width="52" height="9"><path d="M.5 1v7h51V1" fill="none" stroke="#8f9193" stroke-width="1"/></svg>
<div class="sep" style="left:1332px;top:217px;height:30px"></div>
<svg style="left:1344px;top:222px" width="26" height="23"><path d="M3 19c7 0 4-15 11-15" fill="none" stroke="#a8aaac" stroke-width="2"/><circle cx="4" cy="19" r="3.500" fill="#a8aaac"/><circle cx="15" cy="4" r="3.500" fill="#a8aaac"/><path d="M17 14l7 8M24 14l-7 8" stroke="#d9534f" stroke-width="2.400"/></svg>
<svg style="left:1384px;top:222px" width="23" height="23"><path d="M1 21l12-12" stroke="#a8aaac" stroke-width="4.500"/><path d="M17 0v5M22 9h-5M13 3l2 2M21 3l-2 3M17 11l2 3" stroke="#3592c4" stroke-width="2"/></svg>
<div class="sep" style="left:1420px;top:217px;height:30px"></div>
<svg style="left:1436px;top:222px" width="20" height="22"><path d="M0 1.500h19M0 20.500h19" stroke="#a8aaac" stroke-width="3"/><path d="M9.500 3v16" stroke="#a8aaac" stroke-width="4" stroke-dasharray="2.500 2"/></svg>
<svg style="left:1451px;top:243px" width="9" height="5"><use href="#stri" width="9" height="5"/></svg>
<div class="b" style="left:2462px;top:224px;width:18px;height:18px;border-radius:50%;background:#3592c4;color:#1d3c4d;font:bold 15px/18px 'Liberation Sans',sans-serif;text-align:center">?</div>

<!-- attributes strip -->
<div class="b" style="left:2494px;top:168px;width:34px;height:132px;background:#2d2f30"></div>
<svg style="left:2502px;top:187px" width="16" height="16"><path d="M0 3h16M0 8h16M0 13h16" stroke="#a8aaac" stroke-width="1.600"/><path d="M11 0v6M5 5v6M11 10v6" stroke="#a8aaac" stroke-width="2.400"/></svg>
<span class="v" style="left:2500px;top:211px;color:#f2f2f2;height:74px">Attributes</span>

<!-- right strip -->
<div class="b" style="left:2528px;top:87px;width:1.500px;height:1377px;background:#323537"></div>
<svg style="left:2535px;top:102px" width="19" height="15"><use href="#ele" width="19" height="15"/></svg>
<span class="v" style="left:2534px;top:127px;height:49px">Gradle</span>
<svg style="left:2536px;top:210px" width="18" height="20"><path d="M1 2h8M1 2v16h5" fill="none" stroke="#a8aaac" stroke-width="1.600"/><rect x="8" y="5" width="9" height="15" rx="1" fill="#3c3f41" stroke="#a8aaac" stroke-width="1.600"/></svg>
<span class="v" style="left:2534px;top:237px;height:132px">Layout Validation</span>
<svg style="left:2536px;top:406px" width="18" height="20"><path d="M1 2h8M1 2v16h5" fill="none" stroke="#a8aaac" stroke-width="1.600"/><rect x="8" y="5" width="9" height="15" rx="1" fill="#3c3f41" stroke="#a8aaac" stroke-width="1.600"/></svg>
<span class="v" style="left:2534px;top:433px;height:123px">Device Manager</span>
<svg style="left:2538px;top:1143px" width="13" height="20"><use href="#phone" width="13" height="20"/></svg>
<span class="v" style="left:2534px;top:1172px;height:145px;font-size:16.8px">Device File Explorer</span>
<svg style="left:2536px;top:1354px" width="18" height="17"><path d="M1 2h8M1 2v13h5" fill="none" stroke="#a8aaac" stroke-width="1.600"/><rect x="8" y="3" width="9" height="14" rx="1" fill="#3c3f41" stroke="#a8aaac" stroke-width="1.600"/></svg>
<span class="v" style="left:2534px;top:1383px;height:74px">Emulator</span>

<!-- wrenches -->
<svg style="left:1782px;top:317px" width="10" height="20"><path d="M0 0c0 4 1 7 3.500 8V20h3V8C9 7 10 4 10 0L8 0v4H6V0H4v4H2V0z" fill="#a8aaac"/></svg>
<svg style="left:2358px;top:317px" width="10" height="20"><path d="M0 0c0 4 1 7 3.500 8V20h3V8C9 7 10 4 10 0L8 0v4H6V0H4v4H2V0z" fill="#a8aaac"/></svg>

<!-- design screen -->
<div class="b" style="left:1301px;top:348px;width:506px;height:898px;background:#fff;box-shadow:0 0 4px #1c1c1c;border:1.500px solid #5e8fb0;border-top:0"></div>
<div class="b" style="left:1301px;top:348px;width:506px;height:9px;background:linear-gradient(#9c9c9c,#cfcfcf)"></div>
<div class="b" style="left:1303.500px;top:357px;width:501.500px;height:45px;border-radius:3px;background:linear-gradient(#7a24e0 0,#7a24e0 20%,#6200ee 24%,#6200ee 100%)"></div>
<span class="t" style="left:1303px;top:379px;width:502px;text-align:center;color:#000;font:22px/30px 'Noto Sans CJK SC',sans-serif">删除所有记录</span>
<div class="b" style="left:1303px;top:407.500px;width:502px;height:2px;background:#cfcfcf"></div>
<div class="b" style="left:1303px;top:435.500px;width:502px;height:2px;background:#cfcfcf"></div>
<div class="b" style="left:1303px;top:1228px;width:502px;height:17px;background:linear-gradient(rgba(255,255,255,0),#a9a9a9)"></div>
<svg style="left:1811px;top:1250px" width="27" height="27"><path d="M26 0L0 26M26 12L12 26" stroke="#87898b" stroke-width="1" fill="none"/></svg>

<!-- blueprint -->
<div class="b" style="left:1878px;top:348px;width:506px;height:898px;background:#235a6f;border:1.500px dashed #7fc8dc;box-shadow:0 0 4px #1c1c1c"></div>
<div class="b" style="left:1879.500px;top:349.500px;width:503px;height:88px;background:#3a7287"></div>
<div class="b" style="left:1880px;top:355px;width:500px;height:50px;border:3.500px solid #5c9fb5;background:linear-gradient(#4a8296 0,#4a8296 22%,#3a7287 26%)"></div>
<span class="t" style="left:1880px;top:380px;width:500px;text-align:center;color:#6ba6b9;font:18px/30px 'Noto Sans CJK SC',sans-serif">删除所有记录</span>
<div class="b" style="left:1879px;top:407.500px;width:504px;height:2px;border-top:1.500px dashed #6db3c8"></div>
<div class="b" style="left:1879px;top:435.500px;width:504px;height:2px;border-top:1.500px dashed #6db3c8"></div>
<div class="b" style="left:1879.500px;top:1228px;width:503px;height:16.500px;background:#33687c"></div>

<!-- zoom panel -->
<div class="b" style="left:2427px;top:1097px;width:39px;height:44px;background:#2b2d2f;border:1.500px solid #393b3d;border-radius:4px"></div>
<svg style="left:2437px;top:1108px" width="20" height="23"><path d="M5 13V3h2v8-10h2v10V0h2v11V2h2v10V5h2v12c0 3-2 6-5 6H9c-2 0-3-1-4-3L0 13c1-2 3-1 5 0z" fill="#c8c8c8"/></svg>
<div class="b" style="left:2427px;top:1148px;width:39px;height:160px;background:#2b2d2f;border:1.500px solid #393b3d;border-radius:4px"></div>
<svg style="left:2439px;top:1162px" width="16" height="16"><path d="M8 0v16M0 8h16" stroke="#b8babc" stroke-width="2.800"/></svg>
<div class="b" style="left:2439px;top:1208px;width:16px;height:2.800px;background:#b8babc"></div>
<span class="t" style="left:2437px;top:1248px;width:20px;text-align:center;font:bold 16px/30px 'Liberation Sans',sans-serif;color:#b8babc">1:1</span>
<svg style="left:2437px;top:1278px" width="20" height="18"><rect x="1" y="1" width="18" height="16" fill="none" stroke="#b8babc" stroke-width="2"/><path d="M5 8V5h3M15 10v3h-3" fill="none" stroke="#b8babc" stroke-width="1.400"/></svg>

<!-- bottom panels -->
<div class="b" style="left:396px;top:1341px;width:2132px;height:36px;background:#2e3032;border-top:1.500px solid #383a3c"></div>
<div class="b" style="left:33px;top:1377px;width:2495px;height:2px;background:#2f3133"></div>
<div class="b" style="left:33px;top:1417px;width:2495px;height:1.500px;background:#323537"></div>
<span class="t" style="left:42px;top:1400px">Logcat</span>
<svg style="left:2459px;top:1387px" width="19" height="19"><use href="#gear" width="19" height="19"/></svg>
<div class="b" style="left:2499px;top:1396px;width:18px;height:2.500px;background:#a8aaac"></div>

<div class="cb" style="left:47px;top:1433px;width:350px;height:45px"></div>
<svg style="left:63px;top:1443px" width="11" height="20"><use href="#phone" width="11" height="20"/></svg>
<span class="t" style="left:84px;top:1451px">HUAWEI EDI-AL10 <span class="dim">Android 8.0.0</span></span>
<div class="b" style="left:366px;top:1436px;width:28px;height:26px;background:#3c3f41"></div>
<svg style="left:374px;top:1447px" width="13" height="9"><use href="#tri" width="13" height="9"/></svg>
<div class="cb" style="left:416px;top:1433px;width:350px;height:45px"></div>
<span class="t" style="left:427px;top:1451px;width:305px;overflow:hidden;font-size:18.9px">com.example.<b>myapplication</b> <span class="dim">(15659)</span></span>
<svg style="left:743px;top:1447px" width="13" height="9"><use href="#tri" width="13" height="9"/></svg>
<div class="cb" style="left:794px;top:1433px;width:131px;height:45px"></div>
<span class="t" style="left:803px;top:1451px">Verbose</span>
<svg style="left:902px;top:1447px" width="13" height="9"><use href="#tri" width="13" height="9"/></svg>
<div class="cb" style="left:944px;top:1433px;width:1091px;height:45px;background:#45494a;border-color:#5a5d5f"></div>
<svg style="left:953px;top:1442px" width="24" height="20"><circle cx="7.500" cy="7.500" r="6.500" fill="none" stroke="#7e8082" stroke-width="1.600"/><path d="M12 12l5 6" stroke="#7e8082" stroke-width="1.800"/><path d="M18 7h6l-3 4z" fill="#7e8082"/></svg>
<svg style="left:2054px;top:1442px" width="20" height="19"><rect x="1" y="1" width="18" height="17" rx="2" fill="#45494a" stroke="#6b6e70" stroke-width="1.500"/><path d="M6 9l3 5 5-11" fill="none" stroke="#b8babc" stroke-width="1.800"/></svg>
<span class="t" style="left:2084px;top:1451px">Regex</span>
<div class="cb" style="left:2163px;top:1433px;width:350px;height:45px"></div>
<span class="t" style="left:2173px;top:1451px">Show only selected application</span>
<svg style="left:2491px;top:1447px" width="13" height="9"><use href="#tri" width="13" height="9"/></svg>

<!-- tool stripe -->
<div class="b" style="left:0;top:1464px;width:2560px;height:33px;background:#3c3f41;border-top:2px solid #2f3133;border-bottom:1.500px solid #323537"></div>
<svg style="left:53px;top:1474px" width="13" height="20"><path d="M2 0v13l4 7V9l5-5V0" fill="none" stroke="#a8aaac" stroke-width="2.400"/></svg>
<span class="t sm" style="left:75px;top:1484px">Version Control</span>
<svg style="left:229px;top:1475px" width="15" height="15"><path d="M0 1.500h15M0 5.500h15M0 9.500h15M0 13.500h15" stroke="#a8aaac" stroke-width="2" stroke-dasharray="3 1 11"/></svg>
<span class="t sm" style="left:253px;top:1484px">TODO</span>
<div class="b" style="left:330px;top:1473px;width:16px;height:19px;border-radius:50%;background:#c75450"></div>
<div class="b" style="left:337px;top:1476px;width:3px;height:8px;background:#eee"></div><div class="b" style="left:337px;top:1486px;width:3px;height:3px;background:#eee"></div>
<span class="t sm" style="left:354px;top:1484px">Problems</span>
<svg style="left:457px;top:1473px" width="17" height="17"><rect width="17" height="17" fill="#c0c2c4"/><path d="M3 4l5 4-5 4" fill="none" stroke="#3c3f41" stroke-width="2"/></svg>
<span class="t sm" style="left:483px;top:1484px">Terminal</span>
<svg style="left:577px;top:1472px" width="20" height="21"><path d="M0 6l6-6 3 3-2 2 12 13-2 3L5 8 3 9z" fill="#a8aaac"/></svg>
<span class="t sm" style="left:603px;top:1484px">Build</span>
<svg style="left:670px;top:1477px" width="19" height="15"><path d="M2 15a8 8 0 0 1 15 0" fill="none" stroke="#a8aaac" stroke-width="3"/><path d="M8 14l3-8" stroke="#a8aaac" stroke-width="2"/></svg>
<span class="t sm" style="left:696px;top:1484px">Profiler</span>
<svg style="left:785px;top:1472px" width="15" height="22"><ellipse cx="7.500" cy="8" rx="6" ry="8" fill="#a8aaac"/><rect x="3" y="13" width="9" height="9" fill="#a8aaac"/></svg>
<span class="t sm" style="left:809px;top:1484px">App Inspection</span>
<svg style="left:960px;top:1474px" width="12" height="18"><path d="M0 0l12 9-12 9z" fill="#a8aaac"/></svg>
<span class="t sm" style="left:984px;top:1484px">Run</span>
<div class="b" style="left:1025px;top:1466px;width:106px;height:31px;background:#2d2f30"></div>
<svg style="left:1042px;top:1475px" width="15" height="14"><path d="M0 1.500h15M0 7h9M0 12.500h13" stroke="#c8c8c8" stroke-width="2.800"/></svg>
<span class="t sm" style="left:1067px;top:1484px;color:#dcdcdc">Logcat</span>
<div class="b" style="left:2222px;top:1473px;width:18px;height:22px;border-radius:50%;background:#e0a33a;color:#3c3f41;font:bold 13px/22px 'Liberation Sans',sans-serif;text-align:center">9</div>
<span class="t sm" style="left:2247px;top:1484px">Event Log</span>

<!-- status bar -->
<svg style="left:10px;top:1505px" width="17" height="17"><path d="M1 3v13M4 1h12v15H4z" fill="none" stroke="#a8aaac" stroke-width="1.500"/></svg>
<span class="t" style="left:41px;top:1512px;font-size:18.1px">Failed to start monitoring 8DF6R17503000072 (28 minutes ago)</span>
<span class="t sm" style="left:2234px;top:1513px">23:1</span>
<span class="t sm" style="left:2290px;top:1513px">LF</span>
<span class="t sm dim" style="left:2327px;top:1513px">UTF-8</span>
<span class="t sm" style="left:2397px;top:1513px">4 spaces</span>
<svg style="left:2487px;top:1504px" width="17" height="17"><path d="M3 8V3a3 3 0 0 1 6 0" fill="none" stroke="#a8aaac" stroke-width="1.600"/><rect x="5" y="8" width="11" height="9" fill="#a8aaac"/></svg>
<svg style="left:2525px;top:1504px" width="18" height="16"><path d="M0 0h18v12H9l-4 4v-4H0z" fill="#c8c8c8"/><path d="M9 2v6M9 9.500v2" stroke="#3c3f41" stroke-width="2"/></svg>

<!-- Sogou IME -->
<div class="b" style="left:2320px;top:1459px;width:240px;height:38px;background:#fff;box-shadow:0 0 3px rgba(255,255,255,.5)"></div>
<svg style="left:2299px;top:1453px" width="42" height="45"><path d="M3 8L42 0v36L0 45z" fill="#f0561d"/></svg>
<span class="t" style="left:2304px;top:1476px;color:#fff;font:italic bold 46px/30px 'Liberation Sans',sans-serif">S</span>
<span class="t" style="left:2349px;top:1479px;color:#0a67d6;font:bold 22px/30px 'Noto Sans CJK SC',sans-serif">英</span>
<svg style="left:2390px;top:1470px" width="18" height="18"><circle cx="3.500" cy="3.500" r="3" fill="#0a67d6"/><path d="M13 8c3 0 4 2 3 4s-3 5-5 6c1-2 2-4 2-5" fill="#0a67d6"/></svg>
<svg style="left:2422px;top:1466px" width="22" height="28"><rect x="6" y="0" width="10" height="17" rx="5" fill="#0a67d6"/><path d="M3 12a8 8 0 0 0 16 0M11 20v5M6 26h10" fill="none" stroke="#0a67d6" stroke-width="2.200"/></svg>
<svg style="left:2458px;top:1468px" width="23" height="24"><rect x="1" y="1" width="21" height="22" rx="2" fill="#0a67d6"/><path d="M1 8h21M1 13h21M1 18h21M8 8v15M15 8v15" stroke="#fff" stroke-width="1.500"/></svg>
<svg style="left:2494px;top:1467px" width="24" height="26"><path d="M0 4l7-4h10l7 4-3 6-3-1v17H6V9L3 10z" fill="#0a67d6"/></svg>
<div class="b" style="left:2524px;top:1459px;width:36px;height:38px;background:linear-gradient(90deg,#dff3f5,#f4f4ff)"></div>
<svg style="left:2529px;top:1467px" width="24" height="24"><path d="M2 0h8v9H2zM14 0h8v9h-8zM2 14h8v9H2zM14 14h8v9h-8z" fill="#5b63c4"/><path d="M10 9l4 5M14 9l-4 5" stroke="#e25a5a" stroke-width="1.500"/></svg>

</body></html>
